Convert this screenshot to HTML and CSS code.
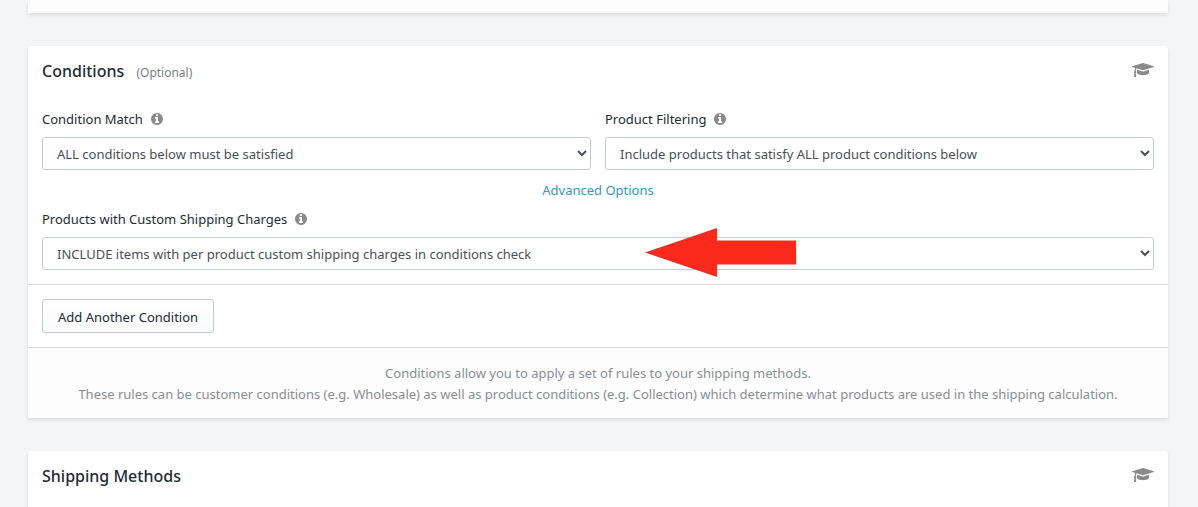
FILE: index.html
```html
<!DOCTYPE html>
<html lang="en">
<head>
  <meta charset="UTF-8">
  <meta name="viewport" content="width=device-width, initial-scale=1.0">
  <title>Shipping Scenario</title>
  <link rel="stylesheet" href="styles.css">
</head>
<body>
  <!-- shared icons -->
  <svg class="icon-defs" aria-hidden="true">
    <symbol id="icon-info" viewBox="128 128 1536 1536">
      <path d="M1152 1376v-160q0-14-9-23t-23-9h-96v-512q0-14-9-23t-23-9h-320q-14 0-23 9t-9 23v160q0 14 9 23t23 9h96v320h-96q-14 0-23 9t-9 23v160q0 14 9 23t23 9h448q14 0 23-9t9-23zm-128-896v-160q0-14-9-23t-23-9h-192q-14 0-23 9t-9 23v160q0 14 9 23t23 9h192q14 0 23-9t9-23zm640 416q0 209-103 385.5t-279.5 279.5-385.5 103-385.5-103-279.5-279.5-103-385.5 103-385.5 279.5-279.5 385.5-103 385.5 103 279.5 279.5 103 385.5z"/>
    </symbol>
    <symbol id="icon-cap" viewBox="0 128 2304 1472">
      <path d="M1774 836l18 316q4 69-82 128t-235 93.5-323 34.5-323-34.5-235-93.5-82-128l18-316 574 181q22 7 48 7t48-7zm530-324q0 23-22 31l-1120 352q-4 1-10 1t-10-1l-652-206q-43 34-71 111.5t-34 178.5q63 36 63 109 0 69-58 107l58 433q2 14-8 25-9 11-24 11h-192q-15 0-24-11-10-11-8-25l58-433q-58-38-58-107 0-73 65-111 11-207 98-330l-333-104q-22-8-22-31t22-31l1120-352q4-1 10-1t10 1l1120 352q22 8 22 31z"/>
    </symbol>
  </svg>

  <main class="page">
    <section class="card card-previous"></section>

    <section class="card">
      <header class="card-header">
        <h2>Conditions <small>(Optional)</small></h2>
        <a href="#" class="help-link" aria-label="Conditions guide"><svg class="icon-cap"><use href="#icon-cap"/></svg></a>
      </header>

      <div class="card-body">
        <div class="row">
          <div class="field">
            <label for="condition-match">Condition Match <svg class="icon-info"><use href="#icon-info"/></svg></label>
            <select id="condition-match">
              <option>ALL conditions below must be satisfied</option>
              <option>ANY condition below can be satisfied</option>
            </select>
          </div>
          <div class="field">
            <label for="product-filtering">Product Filtering <svg class="icon-info"><use href="#icon-info"/></svg></label>
            <select id="product-filtering">
              <option>Include products that satisfy ALL product conditions below</option>
              <option>Include ALL products</option>
            </select>
          </div>
        </div>

        <div class="advanced"><a href="#">Advanced Options</a></div>

        <div class="field">
          <label for="custom-charges">Products with Custom Shipping Charges <svg class="icon-info"><use href="#icon-info"/></svg></label>
          <select id="custom-charges">
            <option>INCLUDE items with per product custom shipping charges in conditions check</option>
            <option>EXCLUDE items with per product custom shipping charges in conditions check</option>
          </select>
          <svg class="arrow" viewBox="0 0 151 49" aria-hidden="true">
            <polygon points="0,24.5 72,0 72,12.5 151,12.5 151,36.5 72,36.5 72,49"/>
          </svg>
        </div>
      </div>

      <div class="card-actions">
        <button type="button" class="btn">Add Another Condition</button>
      </div>

      <footer class="card-footer">
        <p>Conditions allow you to apply a set of rules to your shipping methods.</p>
        <p>These rules can be customer conditions (e.g. Wholesale) as well as product conditions (e.g. Collection) which determine what products are used in the shipping calculation.</p>
      </footer>
    </section>

    <section class="card">
      <header class="card-header">
        <h2>Shipping Methods</h2>
        <a href="#" class="help-link" aria-label="Shipping methods guide"><svg class="icon-cap"><use href="#icon-cap"/></svg></a>
      </header>
      <div class="card-body"></div>
    </section>
  </main>
</body>
</html>
```
FILE: styles.css
```css
* {
  box-sizing: border-box;
}

html {
  overflow: hidden;
}

body {
  margin: 0;
  background: #f4f5f7;
  color: #212b35;
  font-family: "Segoe UI", "Noto Sans", sans-serif;
  font-size: 13px;
  line-height: 20px;
}

.icon-defs {
  display: none;
}

.page {
  display: flex;
  flex-direction: column;
  gap: 33px;
  padding: 0 30px 0 28px;
}

.card {
  background: #fff;
  border-radius: 3px 3px 0 0;
  box-shadow: 0 2px 4px rgba(0, 0, 0, 0.1);
}

.card-previous {
  height: 13px;
  background: #fdfdfd;
  border-radius: 0;
}

.card-header {
  display: flex;
  justify-content: space-between;
  align-items: center;
  height: 50px;
  padding: 0 14px;
}

.card-header h2 {
  margin: 0;
  font-size: 16px;
  font-weight: 500;
}

.card-header small {
  margin-left: 8px;
  color: #798188;
  font-size: 12px;
  font-weight: 400;
  line-height: 12px;
}

.help-link {
  display: flex;
}

.icon-cap {
  width: 22px;
  height: 16px;
  padding-bottom: 2px;
  fill: #8a8a8a;
}

.card-body {
  padding: 13px 14px 14px;
}

.row {
  display: flex;
  gap: 14px;
}

.field {
  position: relative;
  flex: 1;
}

.field label {
  display: flex;
  align-items: center;
  gap: 8px;
  margin-bottom: 8px;
}

.icon-info {
  width: 12px;
  height: 12px;
  fill: #8a8a8a;
}

select {
  display: block;
  width: 100%;
  height: 33px;
  padding: 0 0 0 10px;
  border: 1px solid #c4cdd5;
  border-radius: 3px;
  background: #fff;
  color: #454f5b;
  font: inherit;
}

.advanced {
  padding: 10px 0 9px;
  text-align: center;
}

.advanced a {
  color: #3197bd;
  text-decoration: none;
}

/* callout over the custom charges select */
.arrow {
  position: absolute;
  top: 19px;
  left: 603px;
  width: 151px;
  height: 49px;
  fill: #fc2a1c;
  pointer-events: none;
}

.card-actions {
  padding: 14px;
  border-top: 1px solid #dadcde;
}

.btn {
  display: block;
  height: 34px;
  padding: 1px 15px 0;
  border: 1px solid #c4cdd5;
  border-radius: 3px;
  background: linear-gradient(#fff, #f9fafb);
  box-shadow: 0 1px 0 rgba(22, 29, 37, 0.05);
  color: #212b35;
  font: inherit;
}

.card-footer {
  padding: 15px 14px 13px;
  border-top: 1px solid #dadcde;
  background: #fdfdfd;
  color: #868e96;
  line-height: 21px;
  text-align: center;
}

.card-footer p {
  margin: 0;
}
```
